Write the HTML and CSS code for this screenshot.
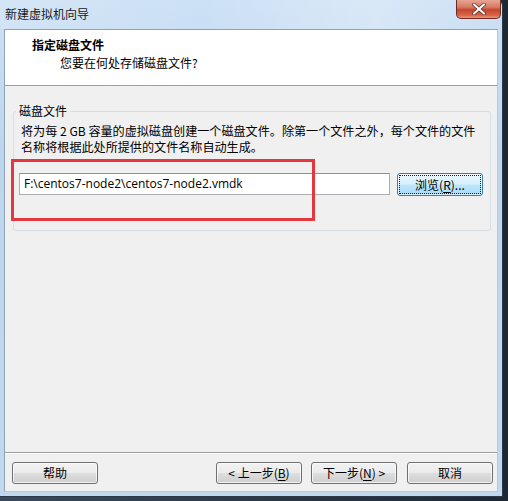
FILE: index.html
```html
<!DOCTYPE html>
<html lang="zh-CN">
<head>
<meta charset="utf-8">
<title>新建虚拟机向导</title>
<link rel="stylesheet" href="styles.css">
</head>
<body>
<div class="window">
  <div class="titlebar">
    <span class="title">新建虚拟机向导</span>
    <div class="close">
      <svg width="16" height="12" viewBox="0 0 16 12"><path d="M3 1.5 L13 10.5 M13 1.5 L3 10.5" stroke="#5a2020" stroke-width="3.6" stroke-linecap="round"/><path d="M3 1.5 L13 10.5 M13 1.5 L3 10.5" stroke="#fff" stroke-width="2.2" stroke-linecap="round"/></svg>
    </div>
  </div>
  <div class="client">
    <div class="header">
      <div class="h-title">指定磁盘文件</div>
      <div class="h-sub">您要在何处存储磁盘文件?</div>
    </div>
    <div class="body">
      <div class="group">
        <span class="legend">磁盘文件</span>
        <div class="desc">
          <div class="line">将为每 2 GB 容量的虚拟磁盘创建一个磁盘文件。除第一个文件之外，每个文件的文件</div>
          <div class="line">名称将根据此处所提供的文件名称自动生成。</div>
        </div>
        <div class="row">
          <div class="input">F:\centos7-node2\centos7-node2.vmdk</div>
          <div class="btn btn-focus"><span class="focus">浏览(<u>R</u>)...</span></div>
        </div>
        <div class="highlight"></div>
      </div>
    </div>
    <div class="footer">
      <div class="btn">帮助</div>
      <div class="spacer"></div>
      <div class="btn">&lt; 上一步(<u>B</u>)</div>
      <div class="btn">下一步(<u>N</u>) &gt;</div>
      <div class="btn">取消</div>
    </div>
  </div>
</div>
</body>
</html>
```
FILE: styles.css
```css
html, body {
  margin: 0;
  padding: 0;
}
body {
  width: 508px;
  height: 501px;
  overflow: hidden;
  background: linear-gradient(90deg, #3a4a5c, #1e2833);
  font-family: "Noto Sans CJK SC", "Noto Sans", sans-serif;
  font-size: 12px;
  line-height: 16px;
  color: #000;
}
.window {
  width: 503px;
  height: 497px;
  box-sizing: border-box;
  background: linear-gradient(180deg, #cde1f5 0%, #bed6ed 30%, #c1d8ee 100%);
  border-radius: 0 6px 0 0;
  border-right: 1px solid #2b3a4a;
  border-bottom: 1px solid #2b3a4a;
  display: flex;
  flex-direction: column;
}
.titlebar {
  height: 29px;
  display: flex;
  align-items: flex-start;
  background: linear-gradient(90deg, rgba(255,255,255,0.15), rgba(255,255,255,0) 40%, rgba(255,255,255,0.25) 75%, rgba(255,255,255,0));
  border-radius: 0 6px 0 0;
}
.title {
  margin: 6px 0 0 5px;
  line-height: 16px;
  color: #1a1a1a;
}
.close {
  margin-left: auto;
  margin-right: 1px;
  width: 45px;
  height: 19px;
  box-sizing: border-box;
  border: 1px solid #6d2a22;
  border-top: none;
  border-radius: 0 0 5px 5px;
  background: linear-gradient(180deg, #e8a493 0%, #d57a62 40%, #c4452b 55%, #d8664a 85%, #e89a7f 100%);
  display: flex;
  align-items: center;
  justify-content: center;
}
.close svg { display: block; }
.client {
  margin-left: 4px;
  width: 494px;
  height: 463px;
  box-sizing: border-box;
  border-top: 1px solid #8fa3b8;
  border-left: 1px solid #8fa3b8;
  border-right: 1px solid #b5c8dc;
  border-bottom: 1px solid #b5c8dc;
  background: #f0f0f0;
  display: flex;
  flex-direction: column;
}
.header {
  background: #fff;
  height: 56px;
  box-sizing: border-box;
  border-bottom: 1px solid #a0a0a0;
  padding: 7px 0 0 27px;
  flex: none;
}
.h-title {
  font-weight: bold;
  line-height: 16px;
}
.h-sub {
  line-height: 16px;
  margin: 2px 0 0 28px;
}
.body {
  flex: 1;
  padding: 25px 6px 0 8px;
}
.group {
  position: relative;
  border: 1px solid #d5dfe5;
  border-radius: 3px;
  height: 118px;
  padding: 0 7px;
}
.legend {
  display: block;
  width: max-content;
  margin: -9px 0 0 -5px;
  padding: 0 3px;
  line-height: 16px;
  background: #f0f0f0;
}
.desc {
  margin: 4px 0 0 0;
  font-size: 12.1px;
  white-space: nowrap;
}
.line {
  height: 16px;
  line-height: 16px;
}
.row {
  display: flex;
  gap: 7px;
  margin: 18px 0 0 -2px;
  align-items: flex-start;
}
.input {
  width: 371px;
  height: 22px;
  box-sizing: border-box;
  border: 1px solid #abadb3;
  border-top-color: #8e8f8f;
  background: #fff;
  font-family: "Open Sans", "Noto Sans", sans-serif;
  font-size: 12px;
  line-height: 20px;
  padding-left: 4px;
  white-space: nowrap;
}
.btn {
  width: 86px;
  height: 22px;
  box-sizing: border-box;
  border: 1px solid #707070;
  border-radius: 3px;
  background: linear-gradient(180deg, #f2f2f2 0%, #ebebeb 48%, #dddddd 52%, #cfcfcf 100%);
  box-shadow: inset 0 0 0 1px rgba(255,255,255,0.7);
  text-align: center;
  line-height: 20px;
  color: #000;
  white-space: nowrap;
}
.btn u { text-decoration: underline; text-underline-offset: 2px; }
.btn-focus {
  height: 23px;
  border-color: #3c7fb1;
  background: linear-gradient(180deg, #eaf6fd 0%, #d9f0fc 48%, #bee6fd 52%, #a7d9f5 100%);
  box-shadow: inset 0 0 0 1px rgba(255,255,255,0.5);
  padding: 2px;
}
.focus {
  display: block;
  height: 17px;
  line-height: 17px;
  outline: 1px dotted #222;
  outline-offset: 0;
}
.highlight {
  position: absolute;
  left: -3px;
  top: 47px;
  width: 304px;
  height: 62px;
  box-sizing: border-box;
  border: 3px solid #e5373f;
}
.footer {
  flex: none;
  height: 39px;
  box-sizing: border-box;
  border-top: 1px solid #a0a0a0;
  box-shadow: inset 0 1px 0 #fff;
  padding: 9px 0 0 7px;
  display: flex;
  gap: 9px;
  align-items: flex-start;
}
.footer .btn { width: 86px; }
.spacer { flex: 1; }
.footer .btn:last-child { margin-right: 4px; margin-left: 1px; }
```
